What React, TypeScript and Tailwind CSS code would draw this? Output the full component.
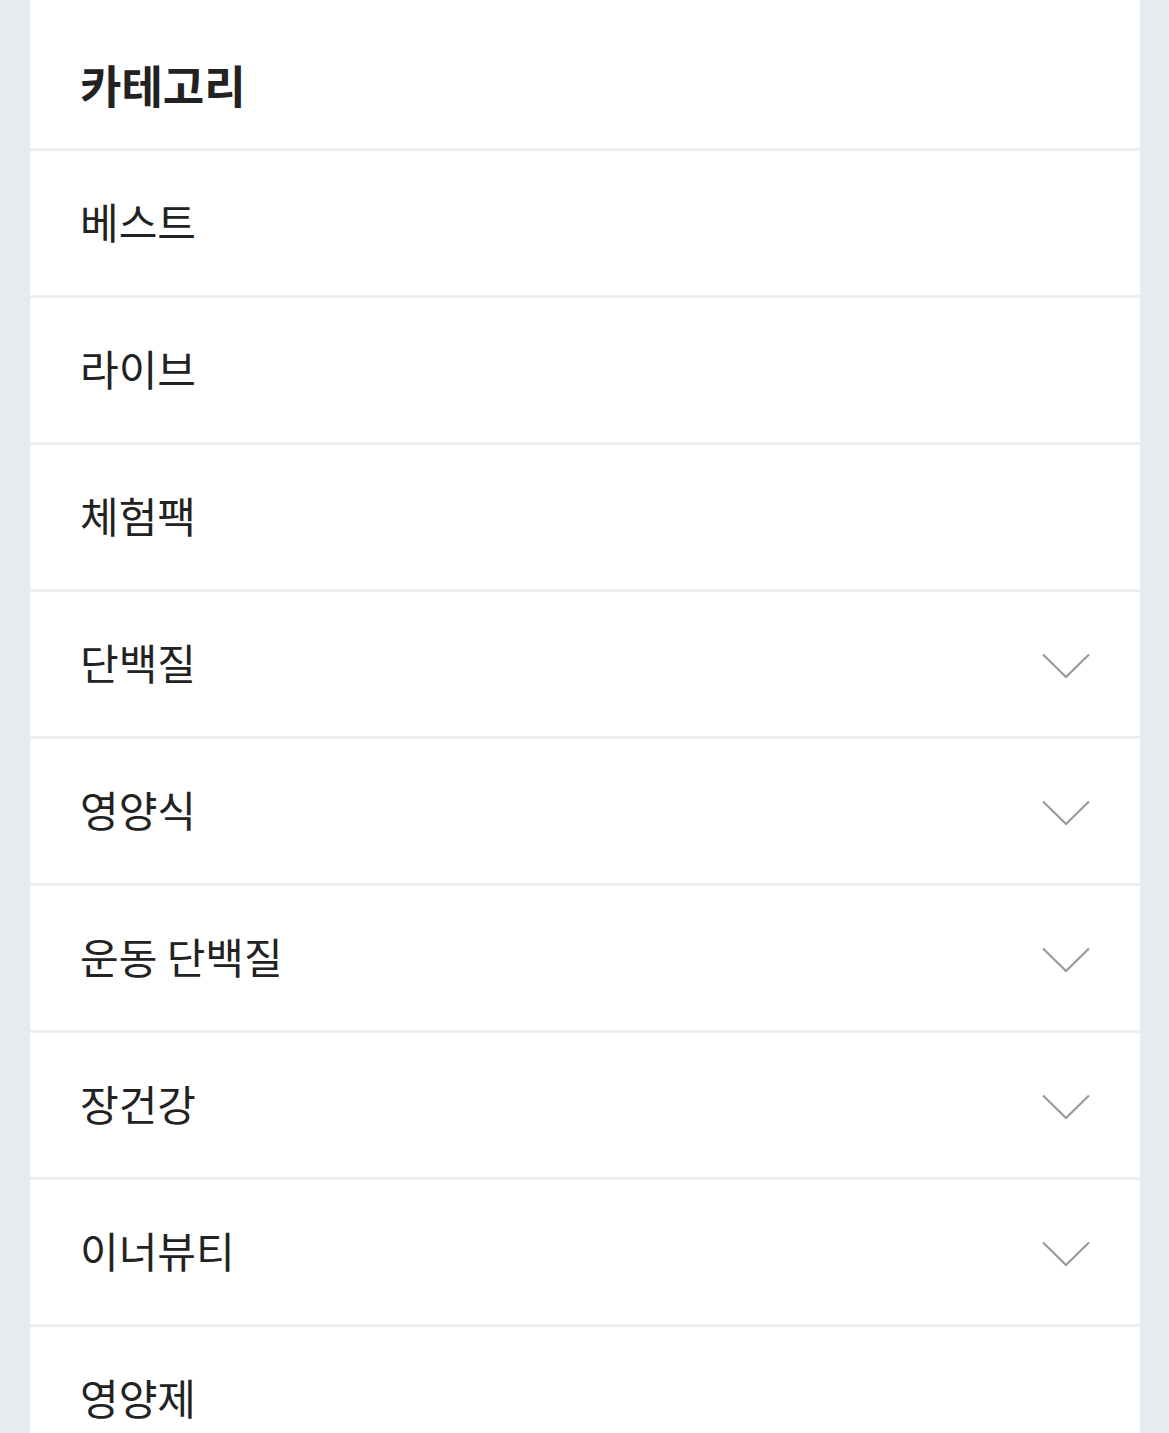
const items: { label: string; expandable: boolean }[] = [
  { label: '베스트', expandable: false },
  { label: '라이브', expandable: false },
  { label: '체험팩', expandable: false },
  { label: '단백질', expandable: true },
  { label: '영양식', expandable: true },
  { label: '운동 단백질', expandable: true },
  { label: '장건강', expandable: true },
  { label: '이너뷰티', expandable: true },
  { label: '영양제', expandable: false },
];

function Chevron() {
  return (
    <svg width="48" height="26" viewBox="0 0 48 26" fill="none" className="mt-[8px] shrink-0">
      <path d="M1 1.5L24 24L47 1.5" stroke="#9a9a9a" strokeWidth="2.2" />
    </svg>
  );
}

export default function App() {
  return (
    <div
      className="min-h-[1433px] w-full bg-[#e8ebee] pl-[30px] pr-[29px] text-[#222222]"
      style={{ fontFamily: '"Noto Sans CJK KR", "Noto Sans", sans-serif' }}
    >
      <div className="h-[1433px] overflow-hidden bg-white">
        <div className="flex h-[148px] items-center pl-[50px] pt-[20px]">
          <h1 className="text-[45px] font-bold leading-none">카테고리</h1>
        </div>
        <ul>
          {items.map((item) => (
            <li
              key={item.label}
              className="flex h-[147px] items-center justify-between border-t-[3px] border-[#eeeeee] pb-[4px] pl-[50px] pr-[50px]"
            >
              <span className="text-[42px] leading-none">{item.label}</span>
              {item.expandable && <Chevron />}
            </li>
          ))}
        </ul>
      </div>
    </div>
  );
}
